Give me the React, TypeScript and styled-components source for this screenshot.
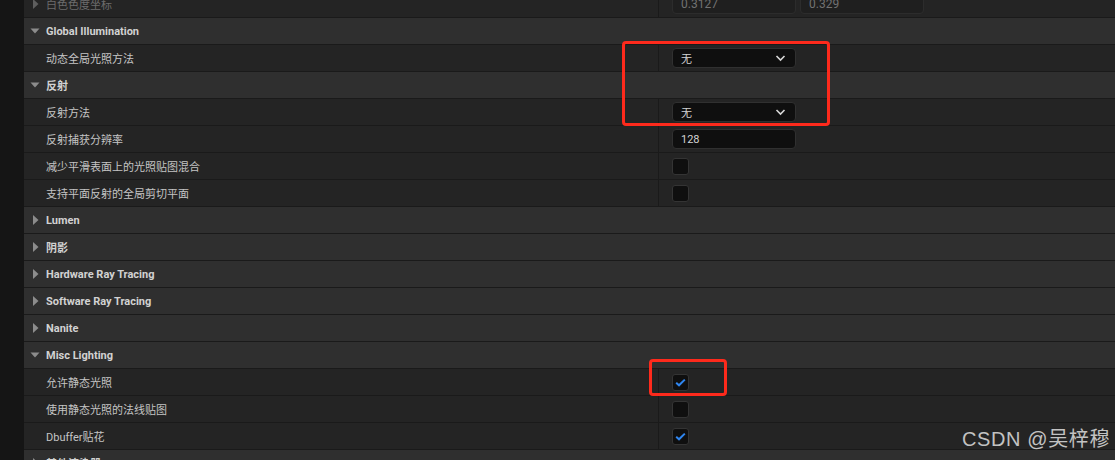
import styled, { createGlobalStyle } from 'styled-components';

const GlobalStyle = createGlobalStyle`
  html, body {
    margin: 0;
    padding: 0;
    background: #151515;
    overflow: hidden;
  }
  body {
    font-family: Roboto, "Noto Sans CJK SC", sans-serif;
    font-size: 11px;
  }
`;

const Page = styled.div`
  position: relative;
  width: 1115px;
  height: 460px;
  display: flex;
  overflow: hidden;
  background: #151515;
`;

const Gutter = styled.div`
  width: 24px;
  flex-shrink: 0;
  background: #151515;
`;

const Panel = styled.div`
  flex: 1;
  display: flex;
  flex-direction: column;
  margin-top: -9px;
  background: #1a1a1a;
`;

const Row = styled.div<{ $header?: boolean }>`
  display: flex;
  height: 26px;
  flex-shrink: 0;
  border-bottom: 1px solid #1a1a1a;
  background: ${p => (p.$header ? '#2f2f2f' : '#242424')};
`;

const NameCell = styled.div<{ $header?: boolean; $arrow?: boolean }>`
  width: ${p => (p.$header ? 'auto' : '635px')};
  flex: ${p => (p.$header ? '1' : 'none')};
  display: flex;
  align-items: center;
  padding-left: ${p => (p.$header || p.$arrow ? '5px' : '22px')};
  box-sizing: border-box;
  border-right: ${p => (p.$header ? 'none' : '1px solid #1a1a1a')};
`;

const Arrow = styled.span`
  width: 17px;
  display: flex;
  align-items: center;
`;

const Label = styled.span<{ $header?: boolean; $dim?: boolean }>`
  color: ${p => (p.$dim ? '#6c6c6c' : p.$header ? '#d2d2d2' : '#c4c4c4')};
  font-weight: ${p => (p.$header ? 700 : 400)};
  white-space: nowrap;
`;

const ValueCell = styled.div`
  flex: 1;
  display: flex;
  align-items: center;
  gap: 4px;
  padding-left: 13px;
`;

const Field = styled.div<{ $dim?: boolean }>`
  width: 124px;
  height: 20px;
  box-sizing: border-box;
  display: flex;
  align-items: center;
  justify-content: space-between;
  padding: 0 9px 0 8px;
  border-radius: 4px;
  background: ${p => (p.$dim ? '#1f1f1f' : '#0f0f0f')};
  border: 1px solid ${p => (p.$dim ? '#2c2c2c' : '#303030')};
  color: ${p => (p.$dim ? '#727272' : '#d4d4d4')};
  font-size: ${p => (p.$dim ? '12px' : '11px')};
`;

const Box = styled.div`
  width: 17px;
  height: 17px;
  box-sizing: border-box;
  border-radius: 3px;
  background: #0f0f0f;
  border: 1px solid #343434;
  display: flex;
  align-items: center;
  justify-content: center;
`;

const Highlight = styled.div`
  position: absolute;
  border: 3px solid #fe2a1c;
  border-radius: 4px;
  box-sizing: border-box;
`;

const Watermark = styled.div`
  position: absolute;
  right: 5px;
  bottom: 8px;
  font-family: "Liberation Sans", "Noto Sans CJK SC", sans-serif;
  font-size: 20px;
  color: #c2c2c2;
  letter-spacing: 0.6px;
`;

const Caret = ({ open, dim }: { open: boolean; dim?: boolean }) => {
  const fill = dim ? '#5e5e5e' : '#8c8c8c';
  return (
    <svg width="12" height="12" viewBox="0 0 12 12">
      {open ? (
        <path d="M1.5 3.5 L10.5 3.5 L6 8.5 Z" fill={fill} />
      ) : (
        <path d="M4 1 L9.5 6 L4 11 Z" fill={fill} />
      )}
    </svg>
  );
};

const Chevron = () => (
  <svg width="11" height="8" viewBox="0 0 11 8">
    <path d="M1.5 2 L5.5 6 L9.5 2" fill="none" stroke="#d8d8d8" strokeWidth="1.6" />
  </svg>
);

const Check = () => (
  <svg width="11" height="9" viewBox="0 0 11 9">
    <path d="M1.2 4.8 L4 7.3 L9.8 1.6" fill="none" stroke="#2f86f0" strokeWidth="2" />
  </svg>
);

type Item =
  | { kind: 'header'; label: string; open: boolean }
  | { kind: 'prop'; label: string; value?: 'select' | 'number' | 'check' | 'uncheck'; text?: string };

const items: Item[] = [
  { kind: 'header', label: 'Global Illumination', open: true },
  { kind: 'prop', label: '动态全局光照方法', value: 'select', text: '无' },
  { kind: 'header', label: '反射', open: true },
  { kind: 'prop', label: '反射方法', value: 'select', text: '无' },
  { kind: 'prop', label: '反射捕获分辨率', value: 'number', text: '128' },
  { kind: 'prop', label: '减少平滑表面上的光照贴图混合', value: 'uncheck' },
  { kind: 'prop', label: '支持平面反射的全局剪切平面', value: 'uncheck' },
  { kind: 'header', label: 'Lumen', open: false },
  { kind: 'header', label: '阴影', open: false },
  { kind: 'header', label: 'Hardware Ray Tracing', open: false },
  { kind: 'header', label: 'Software Ray Tracing', open: false },
  { kind: 'header', label: 'Nanite', open: false },
  { kind: 'header', label: 'Misc Lighting', open: true },
  { kind: 'prop', label: '允许静态光照', value: 'check' },
  { kind: 'prop', label: '使用静态光照的法线贴图', value: 'uncheck' },
  { kind: 'prop', label: 'Dbuffer贴花', value: 'check' },
  { kind: 'header', label: '其他渲染器', open: false },
];

const renderValue = (item: Extract<Item, { kind: 'prop' }>) => {
  switch (item.value) {
    case 'select':
      return (
        <Field>
          <span>{item.text}</span>
          <Chevron />
        </Field>
      );
    case 'number':
      return (
        <Field>
          <span>{item.text}</span>
        </Field>
      );
    case 'check':
      return (
        <Box>
          <Check />
        </Box>
      );
    case 'uncheck':
      return <Box />;
    default:
      return null;
  }
};

const App = () => (
  <Page>
    <GlobalStyle />
    <Gutter />
    <Panel>
      <Row>
        <NameCell $arrow>
          <Arrow>
            <Caret open={false} dim />
          </Arrow>
          <Label $dim>白色色度坐标</Label>
        </NameCell>
        <ValueCell>
          <Field $dim>
            <span>0.3127</span>
          </Field>
          <Field $dim>
            <span>0.329</span>
          </Field>
        </ValueCell>
      </Row>
      {items.map((item, i) =>
        item.kind === 'header' ? (
          <Row key={i} $header>
            <NameCell $header>
              <Arrow>
                <Caret open={item.open} />
              </Arrow>
              <Label $header>{item.label}</Label>
            </NameCell>
          </Row>
        ) : (
          <Row key={i}>
            <NameCell>
              <Label>{item.label}</Label>
            </NameCell>
            <ValueCell>{renderValue(item)}</ValueCell>
          </Row>
        )
      )}
    </Panel>
    <Highlight style={{ left: 622, top: 41, width: 208, height: 85 }} />
    <Highlight style={{ left: 649, top: 359, width: 78, height: 37 }} />
    <Watermark>CSDN @吴梓穆</Watermark>
  </Page>
);

export default App;
